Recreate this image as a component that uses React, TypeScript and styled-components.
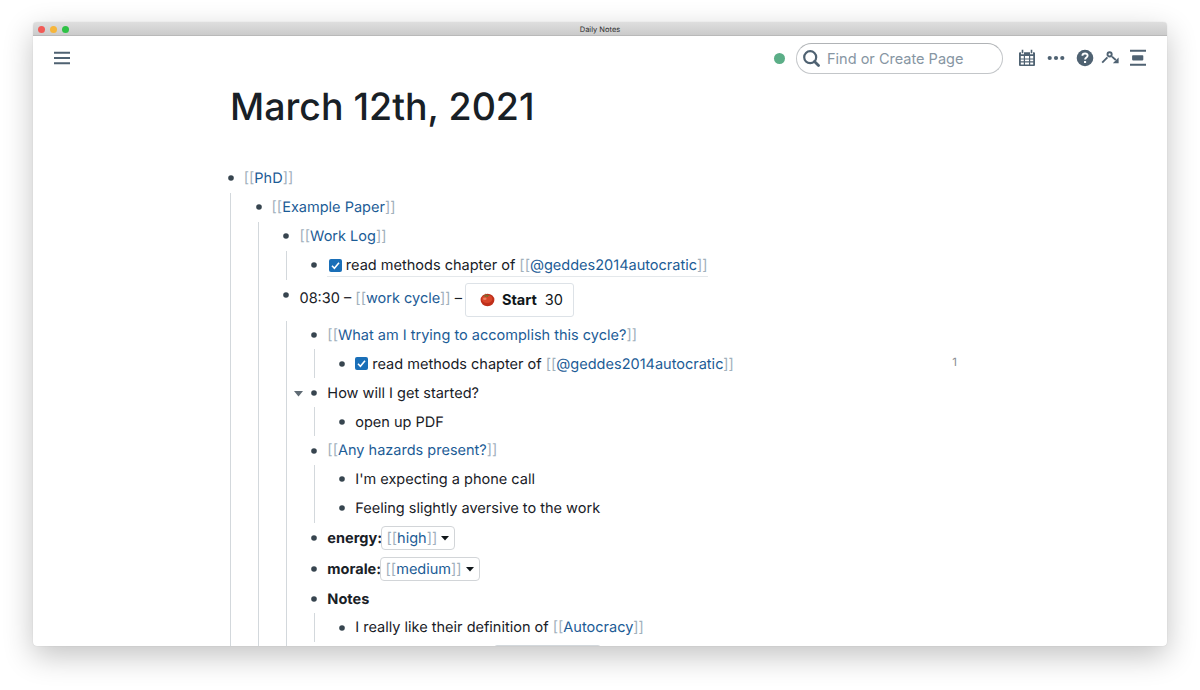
import * as React from "react";
import styled, { createGlobalStyle } from "styled-components";

const GlobalStyle = createGlobalStyle`
  * {
    box-sizing: border-box;
  }

  body {
    margin: 0;
    background: #fff;
    color: #182026;
    font-family: Inter, "Liberation Sans", sans-serif;
    font-size: 14.53px;
    text-rendering: geometricPrecision;
  }
`;

const Desktop = styled.div`
  height: 690px;
  padding: 22px 33px 44px;
  overflow: hidden;
`;

const AppWindow = styled.div`
  display: flex;
  flex-direction: column;
  height: 624px;
  border-radius: 4px;
  background: #fff;
  box-shadow: 0 10px 30px rgba(0, 0, 0, 0.24), 0 0 1px rgba(0, 0, 0, 0.2);
  overflow: hidden;
`;

const TitleBar = styled.div`
  display: grid;
  grid-template-columns: 1fr auto 1fr;
  align-items: center;
  flex: none;
  height: 14px;
  padding: 0 5px;
  border-bottom: 1px solid #b9b9b9;
  background: linear-gradient(#dedede, #cbcbcb);
`;

const Lights = styled.div`
  display: flex;
  gap: 5px;
`;

const Light = styled.span<{ color: string }>`
  width: 7px;
  height: 7px;
  border-radius: 50%;
  background: ${props => props.color};
`;

const WindowTitle = styled.span`
  padding-top: 1px;
  font-size: 7.5px;
  line-height: 13px;
  color: #303030;
`;

const Topbar = styled.header`
  display: flex;
  align-items: center;
  flex: none;
  height: 44px;
  padding: 0 20px;
  color: #4f6272;

  svg {
    display: block;
    flex: none;
  }
`;

const Status = styled.span`
  width: 11px;
  height: 11px;
  margin: 1px 0 0 auto;
  border-radius: 50%;
  background: #5bae87;
`;

const SearchBox = styled.label`
  display: flex;
  align-items: center;
  width: 207px;
  height: 31px;
  margin: 1px 15px 0 11px;
  padding-left: 6px;
  border: 1px solid #c3c6c9;
  border-top-color: #b0b3b6;
  border-radius: 16px;
`;

const SearchInput = styled.input`
  width: 160px;
  margin-left: 7px;
  padding: 0;
  border: 0;
  outline: 0;
  background: none;
  font: inherit;

  &::placeholder {
    color: #8796a3;
    opacity: 1;
  }
`;

const Tools = styled.div`
  display: flex;
  align-items: center;
  gap: 9px;
`;

const GraphIcon = styled.svg`
  margin: 0 1px 0 -2px;
`;

const Page = styled.main`
  flex: 1;
  min-height: 0;
  width: 731px;
  margin-left: 194px;
  overflow: hidden;
`;

const PageTitle = styled.h1`
  margin: 0 0 31px 3px;
  padding-top: 3px;
  font-size: 37.5px;
  font-weight: 500;
  line-height: 50px;
`;

const Row = styled.div<{ height: number }>`
  position: relative;
  display: flex;
  align-items: center;
  height: ${props => props.height}px;
  white-space: nowrap;
`;

const Bullet = styled.svg<{ $raised?: boolean }>`
  flex: none;
  margin: ${props => (props.$raised ? "0 10px 10px 0.7px" : "0 10px 0 0.7px")};
  fill: #37454f;
`;

const Children = styled.div`
  margin-left: 3.3px;
  padding-left: 23.6px;
  border-left: 1px solid #d3d8dc;
`;

const Caret = styled.svg`
  position: absolute;
  left: -17px;
  top: 13px;
`;

const Line = styled.span<{ underlined?: boolean; raised?: boolean }>`
  display: flex;
  align-items: center;
  height: 24px;
  margin-top: ${props => (props.raised ? "-3px" : "0")};
  padding: ${props => (props.underlined ? "1px 1px 0 1.5px" : "0.8px 1px 0 0")};
  border-bottom: 1px solid ${props => (props.underlined ? "#e4e8eb" : "transparent")};
`;

const Brackets = styled.span`
  color: #a1b0bc;
`;

const LinkText = styled.a`
  color: #1c5c96;
`;

const Count = styled.span`
  margin: -3px 1px 0 auto;
  font-size: 11.5px;
  color: #8b8f93;
`;

const Checkbox = styled.span`
  display: flex;
  flex: none;
  width: 13px;
  height: 13px;
  margin: 0 4px 0 0;
  border-radius: 2px;
  background: #1a6fb8;
`;

const StartButton = styled.button`
  display: flex;
  align-items: center;
  height: 34px;
  margin: 3px 0 0 3px;
  padding: 0 10px 0 14px;
  border: 1px solid #dde2e7;
  border-radius: 3px;
  background: #fff;
  color: #10161a;
  font: inherit;

  strong {
    margin: 0 8px 0 7px;
    font-weight: 700;
  }
`;

const Select = styled.span`
  display: flex;
  align-items: center;
  height: 24px;
  margin: 0 0 0 -1px;
  padding: 0 5px 0 4.5px;
  border: 1px solid #d2d5d8;
  border-radius: 4px;

  svg {
    margin: 1px 0 0 4px;
  }
`;

const Strong = styled.strong`
  font-weight: 700;
`;

// runs past the bottom of the window, only its top edge is visible
const EmptyButton = styled.span`
  width: 107px;
  height: 34px;
  margin: -1px 0 0 167px;
  border: 1px solid #d3d8dc;
  border-radius: 3px;
`;

const Ref: React.FC<{ children: React.ReactNode }> = ({ children }) => (
  <span>
    <Brackets>[[</Brackets>
    <LinkText>{children}</LinkText>
    <Brackets>]]</Brackets>
  </span>
);

const Done: React.FC = () => (
  <Checkbox>
    <svg width="13" height="13" viewBox="0 0 13 13" fill="none" stroke="#fff" strokeWidth="1.6">
      <path d="M3 6.8l2.4 2.4L10 3.8" />
    </svg>
  </Checkbox>
);

const DropDown: React.FC<{ value: string }> = ({ value }) => (
  <Select>
    <Ref>{value}</Ref>
    <svg width="8" height="5" viewBox="0 0 8 5">
      <path d="M0 0h8L4 4.6z" fill="#10161a" />
    </svg>
  </Select>
);

const Tomato: React.FC = () => (
  <svg width="15" height="15" viewBox="0 0 15 15">
    <ellipse cx="7.5" cy="8" rx="6.9" ry="6.2" fill="#bf2f1a" />
    <ellipse cx="7" cy="7" rx="5.4" ry="4" fill="#d8452a" />
    <ellipse cx="4.8" cy="6.8" rx="1.8" ry="1.2" fill="#ec7f60" />
    <path d="M2.8 3l3.2.2-.6-2 1.6 1.9 3.4-.1-2.5 1.2.4 1.3-1.9-.9-1.9.8.3-1.3z" fill="#7d6a2c" />
  </svg>
);

interface IBlock {
  content: React.ReactNode;
  height?: number;
  open?: boolean;
  raised?: boolean;
  underlined?: boolean;
  count?: number;
  children?: Array<IBlock>;
}

const task = (
  <>
    <Done />
    <span>
      read methods chapter of <Ref>@geddes2014autocratic</Ref>
    </span>
  </>
);

const cycle: Array<IBlock> = [
  {
    content: <Ref>What am I trying to accomplish this cycle?</Ref>,
    children: [{ content: task, count: 1 }],
  },
  { content: "How will I get started?", open: true, children: [{ content: "open up PDF" }] },
  {
    content: <Ref>Any hazards present?</Ref>,
    children: [{ content: "I'm expecting a phone call" }, { content: "Feeling slightly aversive to the work" }],
  },
  { content: <><Strong>energy:</Strong><DropDown value="high" /></>, height: 31 },
  { content: <><Strong>morale:</Strong><DropDown value="medium" /></>, height: 30.4 },
  {
    content: <Strong>Notes</Strong>,
    children: [{ content: <span>I really like their definition of <Ref>Autocracy</Ref></span> }],
  },
  { content: <EmptyButton />, height: 41 },
];

const blocks: Array<IBlock> = [
  {
    content: <Ref>PhD</Ref>,
    children: [
      {
        content: <Ref>Example Paper</Ref>,
        children: [
          { content: <Ref>Work Log</Ref>, children: [{ content: task, underlined: true }] },
          {
            content: (
              <>
                <span>08:30 – <Ref>work cycle</Ref> –</span>
                <StartButton>
                  <Tomato />
                  <strong>Start</strong>
                  30
                </StartButton>
              </>
            ),
            height: 41,
            raised: true,
            children: cycle,
          },
        ],
      },
    ],
  },
];

const Block: React.FC<{ block: IBlock }> = ({ block }) => (
  <div>
    <Row height={block.height || 28.9}>
      {block.open && (
        <Caret width="9" height="6" viewBox="0 0 9 6">
          <path d="M0 0h9L4.5 5.4z" fill="#5f6b74" />
        </Caret>
      )}
      <Bullet width="6" height="6" viewBox="0 0 6 6" $raised={block.raised}>
        <circle cx="3" cy="3" r="2.8" />
      </Bullet>
      <Line underlined={block.underlined} raised={block.raised}>{block.content}</Line>
      {block.count && <Count>{block.count}</Count>}
    </Row>
    {block.children && (
      <Children>
        {block.children.map((child, i) => (
          <Block key={i} block={child} />
        ))}
      </Children>
    )}
  </div>
);

const App: React.FC = () => (
  <Desktop>
    <GlobalStyle />
    <AppWindow>
      <TitleBar>
        <Lights>
          <Light color="#f25a56" />
          <Light color="#f6b63c" />
          <Light color="#2fc246" />
        </Lights>
        <WindowTitle>Daily Notes</WindowTitle>
      </TitleBar>
      <Topbar>
        <svg width="18" height="18" viewBox="0 0 18 18" fill="none" stroke="currentColor" strokeWidth="1.9">
          <path d="M1 3.7h16M1 9h16M1 14.3h16" />
        </svg>
        <Status />
        <SearchBox>
          <svg width="17" height="17" viewBox="0 0 17 17" fill="none" stroke="currentColor" strokeWidth="2.2">
            <circle cx="7.2" cy="7.2" r="6" />
            <path d="M11.5 11.5l4 4" strokeWidth="2.8" strokeLinecap="round" />
          </svg>
          <SearchInput placeholder="Find or Create Page" />
        </SearchBox>
        <Tools>
          <svg width="18" height="18" viewBox="0 0 18 18">
            <path
              fill="currentColor"
              fillRule="evenodd"
              d="M1 4.2a1 1 0 0 1 1-1h1v2h3v-2h6v2h3v-2h1a1 1 0 0 1 1 1V16a1 1 0 0 1-1 1H2a1 1 0 0 1-1-1zM2.8 6.9v2.5h3V6.9zM7 6.9v2.5h4V6.9zm5.2 0v2.5h3V6.9zM2.8 10.5v1.8h3v-1.8zm4.2 0v1.8h4v-1.8zm5.2 0v1.8h3v-1.8zM2.8 13.4v2h3v-2zm4.2 0v2h4v-2zm5.2 0v2h3v-2z"
            />
            <path d="M4.5 .8v3.4M13.5 .8v3.4" stroke="currentColor" strokeWidth="1.6" />
          </svg>
          <svg width="22" height="18" viewBox="0 0 22 18" fill="currentColor">
            <circle cx="4.7" cy="9" r="2.1" />
            <circle cx="11" cy="9" r="2.1" />
            <circle cx="17.3" cy="9" r="2.1" />
          </svg>
          <svg width="18" height="18" viewBox="0 0 18 18" fill="none">
            <circle cx="9" cy="9" r="8.3" fill="currentColor" />
            <path d="M6.4 6.8C6.5 3.6 11.8 3.7 11.6 6.8c-.1 1.8-2.5 1.7-2.5 3.7" stroke="#fff" strokeWidth="1.9" />
            <path d="M8 12h2.1v2H8z" fill="#fff" />
          </svg>
          <GraphIcon width="18" height="18" viewBox="0 0 18 18" fill="none" stroke="currentColor" strokeWidth="1.9">
            <circle cx="8.6" cy="5.4" r="2.1" />
            <path d="M1.2 13.6l5.2-5.2M11 7.6l3.8 3.4" />
            <path d="M17.6 8.4v5.8h-5.8z" fill="currentColor" stroke="none" />
          </GraphIcon>
          <svg width="18" height="18" viewBox="0 0 18 18" fill="currentColor">
            <path d="M1 .8h16v1.9H1zM1 14.8h16v1.9H1z" />
            <rect x="3.1" y="6.2" width="11.2" height="5.2" rx="0.8" />
          </svg>
        </Tools>
      </Topbar>
      <Page>
        <PageTitle>March 12th, 2021</PageTitle>
        {blocks.map((block, i) => (
          <Block key={i} block={block} />
        ))}
      </Page>
    </AppWindow>
  </Desktop>
);

export default App;
